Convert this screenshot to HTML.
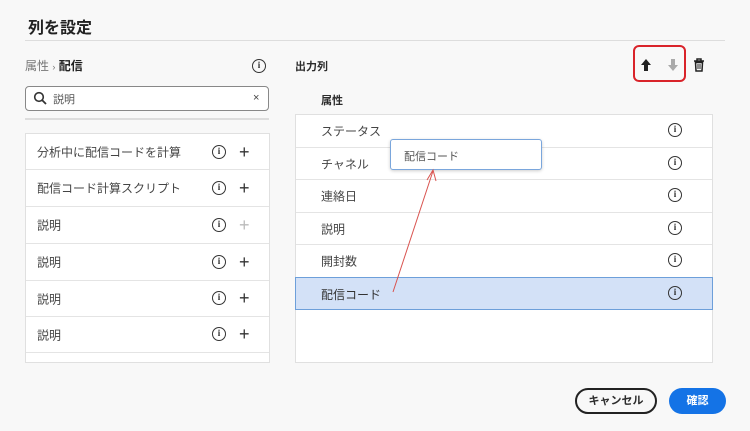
<!DOCTYPE html>
<html><head><meta charset="utf-8"><style>
*{box-sizing:border-box;margin:0;padding:0}
body{width:750px;height:431px;background:#f8f8f8;font-family:"Liberation Sans","Noto Sans CJK JP",sans-serif;color:#2c2c2c;position:relative;overflow:hidden;font-size:12px}
.a{position:absolute}
.info{position:absolute;width:14px;height:14px;border:1.5px solid #333;border-radius:50%;font-size:9px;font-weight:bold;text-align:center;line-height:11px;font-family:"Liberation Serif",serif}
.plus{position:absolute;font-size:18px;line-height:18px;color:#333}
.row{position:absolute;left:0;right:0;border-bottom:1px solid #e4e4e4}
.row span{position:absolute;left:11px;top:50%;transform:translateY(-50%);color:#444}
</style></head><body>
<div class="a" style="left:28px;top:14px;font-size:16px;font-weight:bold;color:#222">列を設定</div>
<div class="a" style="left:25px;top:40px;width:700px;height:1px;background:#ddd"></div>
<div class="a" style="left:25px;top:57px;font-size:12px;color:#777">属性 <span style="font-size:9px">›</span> <b style="color:#222">配信</b></div>
<div class="info" style="left:252px;top:59px">i</div>
<div class="a" style="left:25px;top:86px;width:244px;height:25px;border:1px solid #888;border-radius:4px;background:#fff"></div>
<svg class="a" style="left:33px;top:91px" width="14" height="14"><circle cx="6" cy="6" r="4.3" fill="none" stroke="#333" stroke-width="1.6"/><line x1="9" y1="9" x2="13" y2="13" stroke="#333" stroke-width="1.8"/></svg>
<div class="a" style="left:53px;top:91px;font-size:11px;color:#555">説明</div>
<div class="a" style="left:253px;top:92px;font-size:11px;color:#444">×</div>
<div class="a" style="left:25px;top:118px;width:244px;height:2px;background:#ddd"></div>
<div class="a" style="left:25px;top:133px;width:245px;height:230px;background:#fff;border:1px solid #e0e0e0">
<div class="row" style="top:0;height:36px"><span>分析中に配信コードを計算</span></div>
<div class="row" style="top:36px;height:37px"><span>配信コード計算スクリプト</span></div>
<div class="row" style="top:73px;height:37px"><span>説明</span></div>
<div class="row" style="top:110px;height:37px"><span>説明</span></div>
<div class="row" style="top:147px;height:36px"><span>説明</span></div>
<div class="row" style="top:183px;height:36px"><span>説明</span></div>
</div>
<div class="info" style="left:212px;top:145px">i</div><div class="plus" style="left:239px;top:143px">+</div>
<div class="info" style="left:212px;top:181px">i</div><div class="plus" style="left:239px;top:179px">+</div>
<div class="info" style="left:212px;top:218px">i</div><div class="plus" style="left:239px;top:216px;color:#bbb">+</div>
<div class="info" style="left:212px;top:255px">i</div><div class="plus" style="left:239px;top:253px">+</div>
<div class="info" style="left:212px;top:291px">i</div><div class="plus" style="left:239px;top:289px">+</div>
<div class="info" style="left:212px;top:327px">i</div><div class="plus" style="left:239px;top:325px">+</div>

<div class="a" style="left:295px;top:58px;font-weight:bold;font-size:11px">出力列</div>
<div class="a" style="left:633px;top:45px;width:53px;height:37px;border:2px solid #d9232a;border-radius:6px"></div>
<svg class="a" style="left:640px;top:58px" width="12" height="14"><path d="M6 1 L11 7 H8 V13 H4 V7 H1 Z" fill="#222"/></svg>
<svg class="a" style="left:667px;top:58px" width="12" height="14"><path d="M6 13 L11 7 H8 V1 H4 V7 H1 Z" fill="#aaa"/></svg>
<svg class="a" style="left:693px;top:58px" width="12" height="14"><path d="M1 3 H11 M4 3 V1 H8 V3 M2.5 4.5 H9.5 L9 13 H3 Z" fill="none" stroke="#222" stroke-width="1.5"/><path d="M5 6 V11 M7 6 V11" stroke="#222"/></svg>
<div class="a" style="left:321px;top:92px;font-weight:bold;font-size:11px">属性</div>
<div class="a" style="left:295px;top:114px;width:418px;height:249px;background:#fff;border:1px solid #e0e0e0">
<div class="row" style="top:0;height:33px"><span style="left:25px">ステータス</span></div>
<div class="row" style="top:33px;height:32px"><span style="left:25px">チャネル</span></div>
<div class="row" style="top:65px;height:33px"><span style="left:25px">連絡日</span></div>
<div class="row" style="top:98px;height:32px"><span style="left:25px">説明</span></div>
<div class="row" style="top:130px;height:33px"><span style="left:25px">開封数</span></div>
</div>
<div class="a" style="left:295px;top:277px;width:418px;height:33px;background:#d3e1f7;border:1px solid #6d9fda"><span class="a" style="left:25px;top:8px;color:#333">配信コード</span></div>
<div class="info" style="left:668px;top:123px">i</div>
<div class="info" style="left:668px;top:156px">i</div>
<div class="info" style="left:668px;top:188px">i</div>
<div class="info" style="left:668px;top:221px">i</div>
<div class="info" style="left:668px;top:253px">i</div>
<div class="info" style="left:668px;top:286px">i</div>
<div class="a" style="left:390px;top:139px;width:152px;height:31px;background:#fff;border:1px solid #7aa6dc;border-radius:3px;box-shadow:0 1px 3px rgba(0,0,0,.2)"><span class="a" style="left:13px;top:8px;color:#555;font-size:11px">配信コード</span></div>
<svg class="a" style="left:380px;top:160px" width="70" height="140"><path d="M13 132 L53 11" stroke="#d9534f" stroke-width="1" fill="none"/><path d="M47 20 L53 10 L56 21" stroke="#d9534f" stroke-width="1" fill="none"/></svg>
<div class="a" style="left:575px;top:388px;width:82px;height:26px;border:2px solid #222;border-radius:13px;text-align:center;line-height:22px;font-weight:bold;font-size:11px">キャンセル</div>
<div class="a" style="left:669px;top:388px;width:57px;height:26px;background:#1473e6;border-radius:13px;text-align:center;line-height:26px;font-weight:bold;font-size:11px;color:#fff">確認</div>
</body></html>
